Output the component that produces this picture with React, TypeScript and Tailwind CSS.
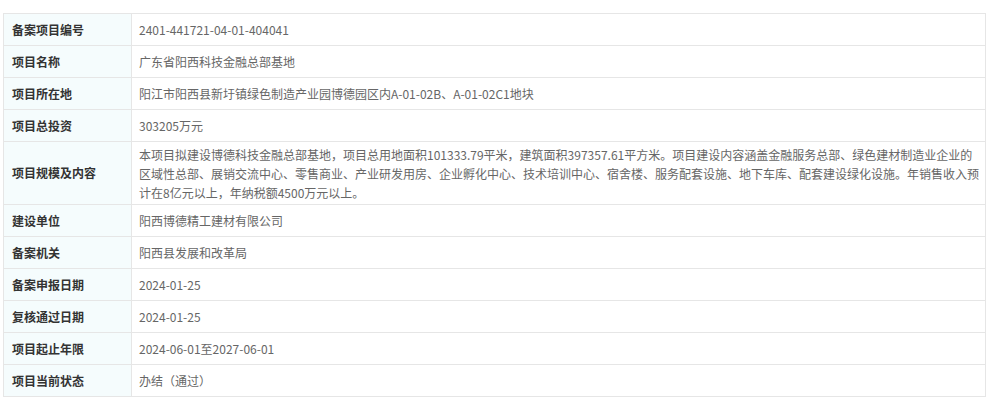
const rows: [string, string[]][] = [
  ["备案项目编号", ["2401-441721-04-01-404041"]],
  ["项目名称", ["广东省阳西科技金融总部基地"]],
  ["项目所在地", ["阳江市阳西县新圩镇绿色制造产业园博德园区内A-01-02B、A-01-02C1地块"]],
  ["项目总投资", ["303205万元"]],
  [
    "项目规模及内容",
    [
      "本项目拟建设博德科技金融总部基地，项目总用地面积101333.79平米，建筑面积397357.61平方米。项目建设内容涵盖金融服务总部、绿色建材制造业企业的",
      "区域性总部、展销交流中心、零售商业、产业研发用房、企业孵化中心、技术培训中心、宿舍楼、服务配套设施、地下车库、配套建设绿化设施。年销售收入预",
      "计在8亿元以上，年纳税额4500万元以上。",
    ],
  ],
  ["建设单位", ["阳西博德精工建材有限公司"]],
  ["备案机关", ["阳西县发展和改革局"]],
  ["备案申报日期", ["2024-01-25"]],
  ["复核通过日期", ["2024-01-25"]],
  ["项目起止年限", ["2024-06-01至2027-06-01"]],
  ["项目当前状态", ["办结（通过）"]],
];

export default function App() {
  return (
    <div
      className="min-h-screen bg-white pt-[13px] pl-[3px]"
      style={{ fontFamily: '"Microsoft YaHei", "Noto Sans CJK SC", sans-serif' }}
    >
      <table className="w-[983px] border-collapse border border-[#e6e6e6] text-[12px]">
        <tbody>
          {rows.map(([label, lines], i) => (
            <tr key={label}>
              <td className="w-[128px] border border-[#e6e6e6] bg-[#f5fcfd] pl-[8px] font-bold text-[#333] h-[32px] align-middle">
                {label}
              </td>
              <td
                className={`border border-[#e6e6e6] pl-[7px] pr-0 text-[#666] align-middle leading-[19px] ${
                  i === 4 ? "h-[63px]" : "h-[32px]"
                }`}
              >
                {lines.map((l) => (
                  <div key={l} className="whitespace-nowrap">
                    {l}
                  </div>
                ))}
              </td>
            </tr>
          ))}
        </tbody>
      </table>
    </div>
  );
}
